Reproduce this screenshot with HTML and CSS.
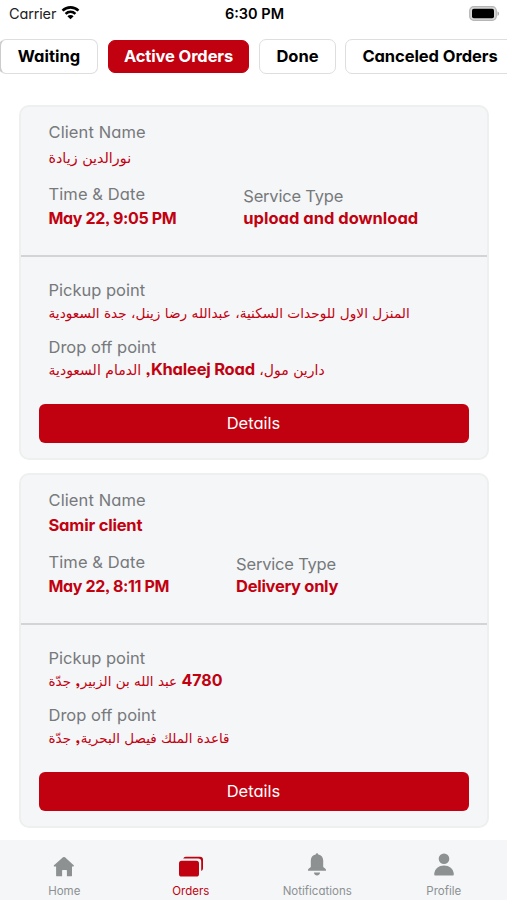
FILE: index.html
```html
<!DOCTYPE html>
<html lang="en">
<head>
<meta charset="utf-8">
<title>Active Orders</title>
<link rel="stylesheet" href="styles.css">
</head>
<body>
<div class="screen">
  <header class="status">
    <div class="carrier"><span class="carrier-name">Carrier</span>
      <svg width="20" height="16" viewBox="0 0 20 16" fill="none" stroke="#000" stroke-width="2.7"><path class="arc" d="M1.6 5.5C6.4.9 13.6.9 18.4 5.5M4.8 8.9c3-2.8 7.400-2.800 10.400 0"/><path d="M10 14.600 6.700 11.400c1.800-1.700 4.800-1.700 6.600 0z" fill="#000" stroke="none"/></svg>
    </div>
    <div class="clock">6:30 PM</div>
    <svg class="battery" width="31" height="16" viewBox="0 0 31 16"><rect class="shell" x=".7" y=".7" width="26.600" height="13.600" rx="4"/><rect class="charge" x="3" y="2.800" width="22" height="9.400" rx="1.800"/><path class="cap" d="M28.500 5.200c2 .8 2 3.800 0 4.600z"/></svg>
  </header>
  <nav class="tabs">
    <div class="tab waiting"><span>Waiting</span></div>
    <div class="tab active"><span>Active Orders</span></div>
    <div class="tab done"><span>Done</span></div>
    <div class="tab canceled"><span>Canceled Orders</span></div>
  </nav>
  <main class="orders">
    <article class="card">
      <section class="summary">
        <div class="label client">Client Name</div>
        <div class="value name ar" dir="rtl">نورالدين زيادة</div>
        <div class="facts">
          <div><div class="label time">Time &amp; Date</div><div class="value date">May 22, 9:05 PM</div></div>
          <div class="service"><div class="label type">Service Type</div><div class="value upload">upload and download</div></div>
        </div>
      </section>
      <section class="route">
        <div class="label pickup">Pickup point</div>
        <div class="value ar long" dir="rtl">المنزل الاول للوحدات السكنية، عبدالله رضا زينل، جدة السعودية</div>
        <div class="label drop">Drop off point</div>
        <div class="value ar mall" dir="rtl">دارين مول، <b>Khaleej Road,</b> الدمام السعودية</div>
      </section>
      <button class="details">Details</button>
    </article>
    <article class="card">
      <section class="summary">
        <div class="label client">Client Name</div>
        <div class="value name samir">Samir client</div>
        <div class="facts">
          <div><div class="label time">Time &amp; Date</div><div class="value date">May 22, 8:11 PM</div></div>
          <div class="service"><div class="label type">Service Type</div><div class="value delivery">Delivery only</div></div>
        </div>
      </section>
      <section class="route">
        <div class="label pickup">Pickup point</div>
        <div class="value ar zubair" dir="rtl"><b class="number">4780</b> عبد الله بن الزبير<b>,</b> جدّة</div>
        <div class="label drop">Drop off point</div>
        <div class="value ar base" dir="rtl">قاعدة الملك فيصل البحرية<b>,</b> جدّة</div>
      </section>
      <button class="details">Details</button>
    </article>
  </main>
  <footer class="bottom">
    <div class="item home"><svg width="22" height="24" viewBox="0 0 22 24"><path d="M10 3.300q1-.8 2 0l8.700 8q.8 1-.4 1.100H19v9q0 .9-.9.900h-4.200v-5.700q0-.6-.6-.6H9.700q-.6 0-.6.600v5.700H4q-.9 0-.9-.9v-9H1.200q-1-.1-.2-1.100z"/></svg><span>Home</span></div>
    <div class="item on"><svg width="26" height="24" viewBox="0 0 26 24"><rect x="1" y="6.800" width="20" height="15.700" rx="2.600"/><path d="M5.200 4.500q.6-1.700 2.500-1.700H22q3 0 3 3v8.700q0 1.900-1.800 2.600V7.500q0-3-3-3z"/></svg><span>Orders</span></div>
    <div class="item"><svg width="22" height="24" viewBox="0 0 22 24"><path d="M11 .3q1.100 0 1.300 1.100c3.200.6 4.900 2.900 4.900 6.200v6.400l2.200 1.700q.9.800.6 2.100H2q-.3-1.300.6-2.100L4.800 14V7.600c0-3.300 1.700-5.600 4.900-6.200Q9.900.3 11 .3zM7.900 19.400h6.200c-.4 4-5.800 4-6.200 0z"/></svg><span>Notifications</span></div>
    <div class="item"><svg width="22" height="24" viewBox="0 0 22 24"><circle cx="11" cy="5.800" r="5.300"/><path d="M1.200 21.500c.2-12 19.400-12 19.600 0q0 1-1 1H2.200q-1 0-1-1z"/></svg><span>Profile</span></div>
  </footer>
</div>
</body>
</html>
```
FILE: styles.css
```css
* { box-sizing: border-box; }
body { margin: 0; background: #fff; font-family: Inter, "DejaVu Sans", sans-serif; font-feature-settings: "cv11", "ss03"; }
.screen { width: 507px; height: 900px; overflow: hidden; display: flex; flex-direction: column; }
svg { display: block; fill: currentColor; }
.arc { fill: none; }
.status { flex: none; height: 39px; display: grid; grid-template-columns: 1fr 80px 1fr; padding: 5px 7px 0 9px; font-size: 14.500px; line-height: 18px; }
.carrier { display: flex; gap: 5px; color: #222; }
.carrier-name { letter-spacing: -.15px; }
.carrier svg { width: 19px; }
.clock { font-weight: 600; white-space: nowrap; text-align: center; }
.battery { justify-self: end; margin-top: 1px; }
.shell { fill: #d8d8d8; stroke: #b5b5b5; stroke-width: 1.2; }
.charge { fill: #000; }
.cap { fill: #aaa; }
.tabs { flex: none; display: flex; gap: 10px; width: 560px; height: 35px; margin-left: -1px; }
.tab { flex: none; height: 35px; border: 1px solid #dedede; border-radius: 7px; display: flex; justify-content: center; font-size: 16.500px; line-height: 32px; font-weight: 700; white-space: nowrap; }
.waiting { width: 99px; border-left: 2px solid #ccc; }
.active { width: 141px; height: 33px; margin-top: 1px; background: #c20110; border-color: #c20110; color: #fff; line-height: 30px; letter-spacing: -.12px; }
.done { width: 77px; }
.canceled { width: 170px; margin-left: -1px; letter-spacing: -.07px; }
.orders { flex: none; height: 766px; padding: 31px 18px 0 19px; display: flex; flex-direction: column; gap: 13px; }
.card { height: 355px; border: 2px solid #eeefef; border-radius: 10px; background: #f4f6f8; display: flex; flex-direction: column; }
.summary { height: 150px; padding: 15px 27px 0 27.500px; border-bottom: 2px solid #d2d5d6; }
.route { height: 147px; padding: 23px 27px 0 27.500px; }
.label, .value { height: 20px; line-height: 20px; white-space: nowrap; }
.label { color: #77797b; font-size: 16.500px; }
.value { color: #c20110; font-size: 16.500px; font-weight: 700; }
.value.ar { width: fit-content; font-family: "DejaVu Sans", sans-serif; font-size: 13.700px; font-weight: 400; }
.value.name.ar { font-size: 14.300px; }
.value.mall { font-size: 14px; }
.value.base { font-size: 13.500px; }
.ar b { font-family: Inter, sans-serif; font-size: 16.500px; line-height: 16px; }
.mall b { letter-spacing: -.22px; }
.ar .number { font-size: 16px; letter-spacing: -1px; }
.value.zubair { font-size: 13.500px; }
.client, .time { letter-spacing: .1px; }
.name { margin: 6px 0 16px; }
.samir { margin: 5px 0 17px; letter-spacing: -.2px; }
.facts { display: flex; gap: 67px; }
.facts .value { margin-top: 4px; }
.facts .date { font-size: 16px; letter-spacing: -.35px; }
.delivery { letter-spacing: -.3px; }
.type { letter-spacing: -.2px; }
.service .label { margin-top: 2px; }
.facts .service .value { margin-top: 2px; }
.route .value { margin: 3px 0 14px; }
.details { flex: none; height: 39px; margin: 0 18px 0 18px; padding: 0 1px 2px 0; border: 0; border-radius: 6px; background: #c20110; color: #fff; font: 16.500px Inter, sans-serif; font-feature-settings: inherit; }
.bottom { flex: 1; display: grid; grid-template-columns: repeat(4, 126.500px); padding-left: 1px; background: #f4f6f8; color: #8d9192; }
.item { display: flex; flex-direction: column; align-items: center; padding-top: 13px; font-size: 11.500px; }
.item svg { flex: none; }
.item span { line-height: 16px; margin-top: 6px; }
.item.home, .item.on { padding-top: 14px; }
.item.home span, .item.on span { margin-top: 5px; }
.on { color: #c20110; }
```
